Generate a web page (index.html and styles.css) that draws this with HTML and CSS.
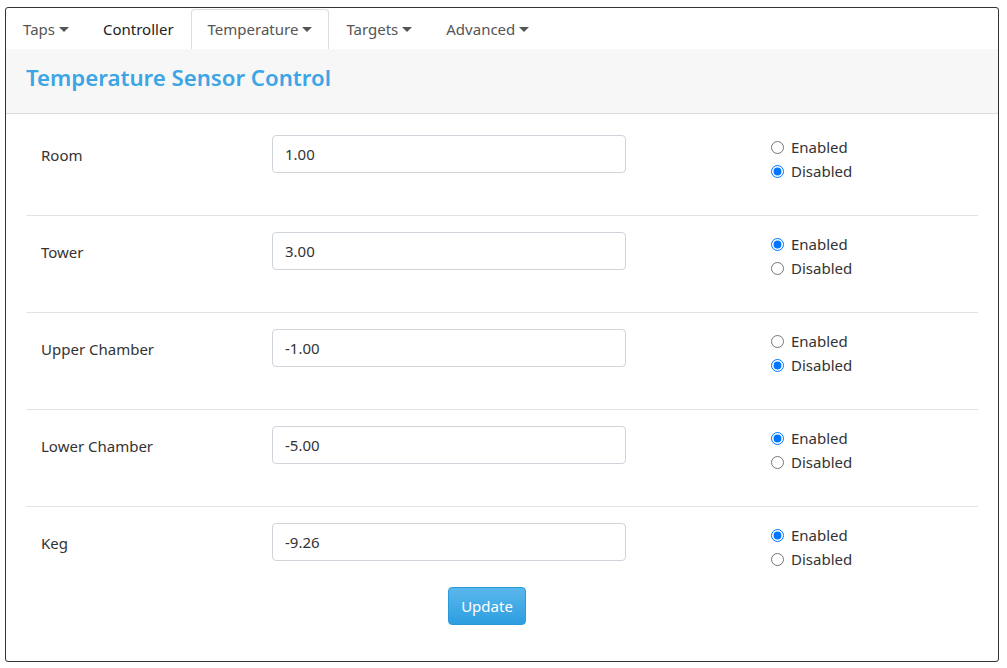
FILE: index.html
```html
<!DOCTYPE html>
<html>
<head>
<meta charset="utf-8">
<link rel="stylesheet" href="styles.css">
</head>
<body>
<div class="frame">
  <nav class="tabs">
    <a class="tab dropdown">Taps</a>
    <a class="tab dark">Controller</a>
    <a class="tab dropdown active">Temperature</a>
    <a class="tab dropdown">Targets</a>
    <a class="tab dropdown">Advanced</a>
  </nav>
  <header class="head">
    <h1 class="title">Temperature Sensor Control</h1>
  </header>
  <form class="body">
    <div class="row">
      <label class="name">Room</label>
      <input class="field" type="text" value="1.00">
      <div class="radios">
        <label class="opt"><input type="radio" name="r1"> Enabled</label>
        <label class="opt"><input type="radio" name="r1" checked> Disabled</label>
      </div>
    </div>
    <div class="row">
      <label class="name">Tower</label>
      <input class="field" type="text" value="3.00">
      <div class="radios">
        <label class="opt"><input type="radio" name="r2" checked> Enabled</label>
        <label class="opt"><input type="radio" name="r2"> Disabled</label>
      </div>
    </div>
    <div class="row">
      <label class="name">Upper Chamber</label>
      <input class="field" type="text" value="-1.00">
      <div class="radios">
        <label class="opt"><input type="radio" name="r3"> Enabled</label>
        <label class="opt"><input type="radio" name="r3" checked> Disabled</label>
      </div>
    </div>
    <div class="row">
      <label class="name">Lower Chamber</label>
      <input class="field" type="text" value="-5.00">
      <div class="radios">
        <label class="opt"><input type="radio" name="r4" checked> Enabled</label>
        <label class="opt"><input type="radio" name="r4"> Disabled</label>
      </div>
    </div>
    <div class="row last">
      <label class="name">Keg</label>
      <input class="field" type="text" value="-9.26">
      <div class="radios">
        <label class="opt"><input type="radio" name="r5" checked> Enabled</label>
        <label class="opt"><input type="radio" name="r5"> Disabled</label>
      </div>
    </div>
    <div class="actions">
      <button class="btn" type="button">Update</button>
    </div>
  </form>
</div>
</body>
</html>
```
FILE: styles.css
```css
* { box-sizing: border-box; }
html, body { margin: 0; padding: 0; background: #fff; }
body {
  font-family: "Noto Sans", "Open Sans", sans-serif;
  font-size: 15px;
  color: #212529;
}
.frame {
  margin: 7px 0 0 5px;
  width: 994px;
  height: 655px;
  border: 1px solid #333;
  border-radius: 3px;
  overflow: hidden;
}
.tabs {
  display: flex;
  height: 41px;
  padding: 1px 0 0 0;
}
.tab {
  display: flex;
  align-items: center;
  padding: 0 16px 2px 16px;
  font-size: 15px;
  color: #555;
  border: 1px solid transparent;
  border-bottom: none;
  border-radius: 4px 4px 0 0;
  text-decoration: none;
}
.tab.dark { color: #222; }
.tab.active {
  border-color: #ddd;
  background: #fff;
}
.dropdown::after {
  content: "";
  display: inline-block;
  margin-left: 4px;
  margin-top: 1px;
  border-top: 5px solid;
  border-left: 5px solid transparent;
  border-right: 5px solid transparent;
}
.head {
  background: #f7f7f7;
  height: 65px;
  border-bottom: 1px solid #dcdcdc;
  display: flex;
  align-items: center;
  padding-left: 20px;
}
.title {
  margin: 0 0 8px 0;
  font-size: 22.2px;
  font-weight: 600;
  color: #3ba5e5;
}
.body {
  padding: 5px 20px 0 20px;
  margin: 0;
}
.row {
  display: grid;
  grid-template-columns: 246px 354px 145px 1fr;
  align-items: start;
  padding: 16px 0 32px 0;
  border-bottom: 1px solid #e3e3e3;
}
.row.last { border-bottom: none; padding-bottom: 16px; }
.name {
  padding-left: 15px;
  line-height: 38px;
  padding-top: 1px;
  color: #333;
}
.field {
  grid-column: 2;
  height: 38px;
  border: 1px solid #ced4da;
  border-radius: 4px;
  padding: 0 12px;
  font-family: inherit;
  font-size: 15px;
  color: #333;
}
.radios {
  grid-column: 4;
  display: flex;
  flex-direction: column;
}
.opt {
  display: flex;
  align-items: center;
  height: 24px;
  color: #333;
  gap: 4px;
}
.opt input {
  margin: 0 3px 0 0;
  width: 13px;
  height: 13px;
}
.actions {
  display: flex;
  justify-content: center;
  padding-right: 30px;
}
.btn {
  width: 78px;
  height: 38px;
  border: 1px solid #2b9ad9;
  border-radius: 4px;
  background: linear-gradient(#5ab7ec, #2d9ee0);
  color: #fff;
  font-family: inherit;
  font-size: 15px;
  padding: 0;
}
```
